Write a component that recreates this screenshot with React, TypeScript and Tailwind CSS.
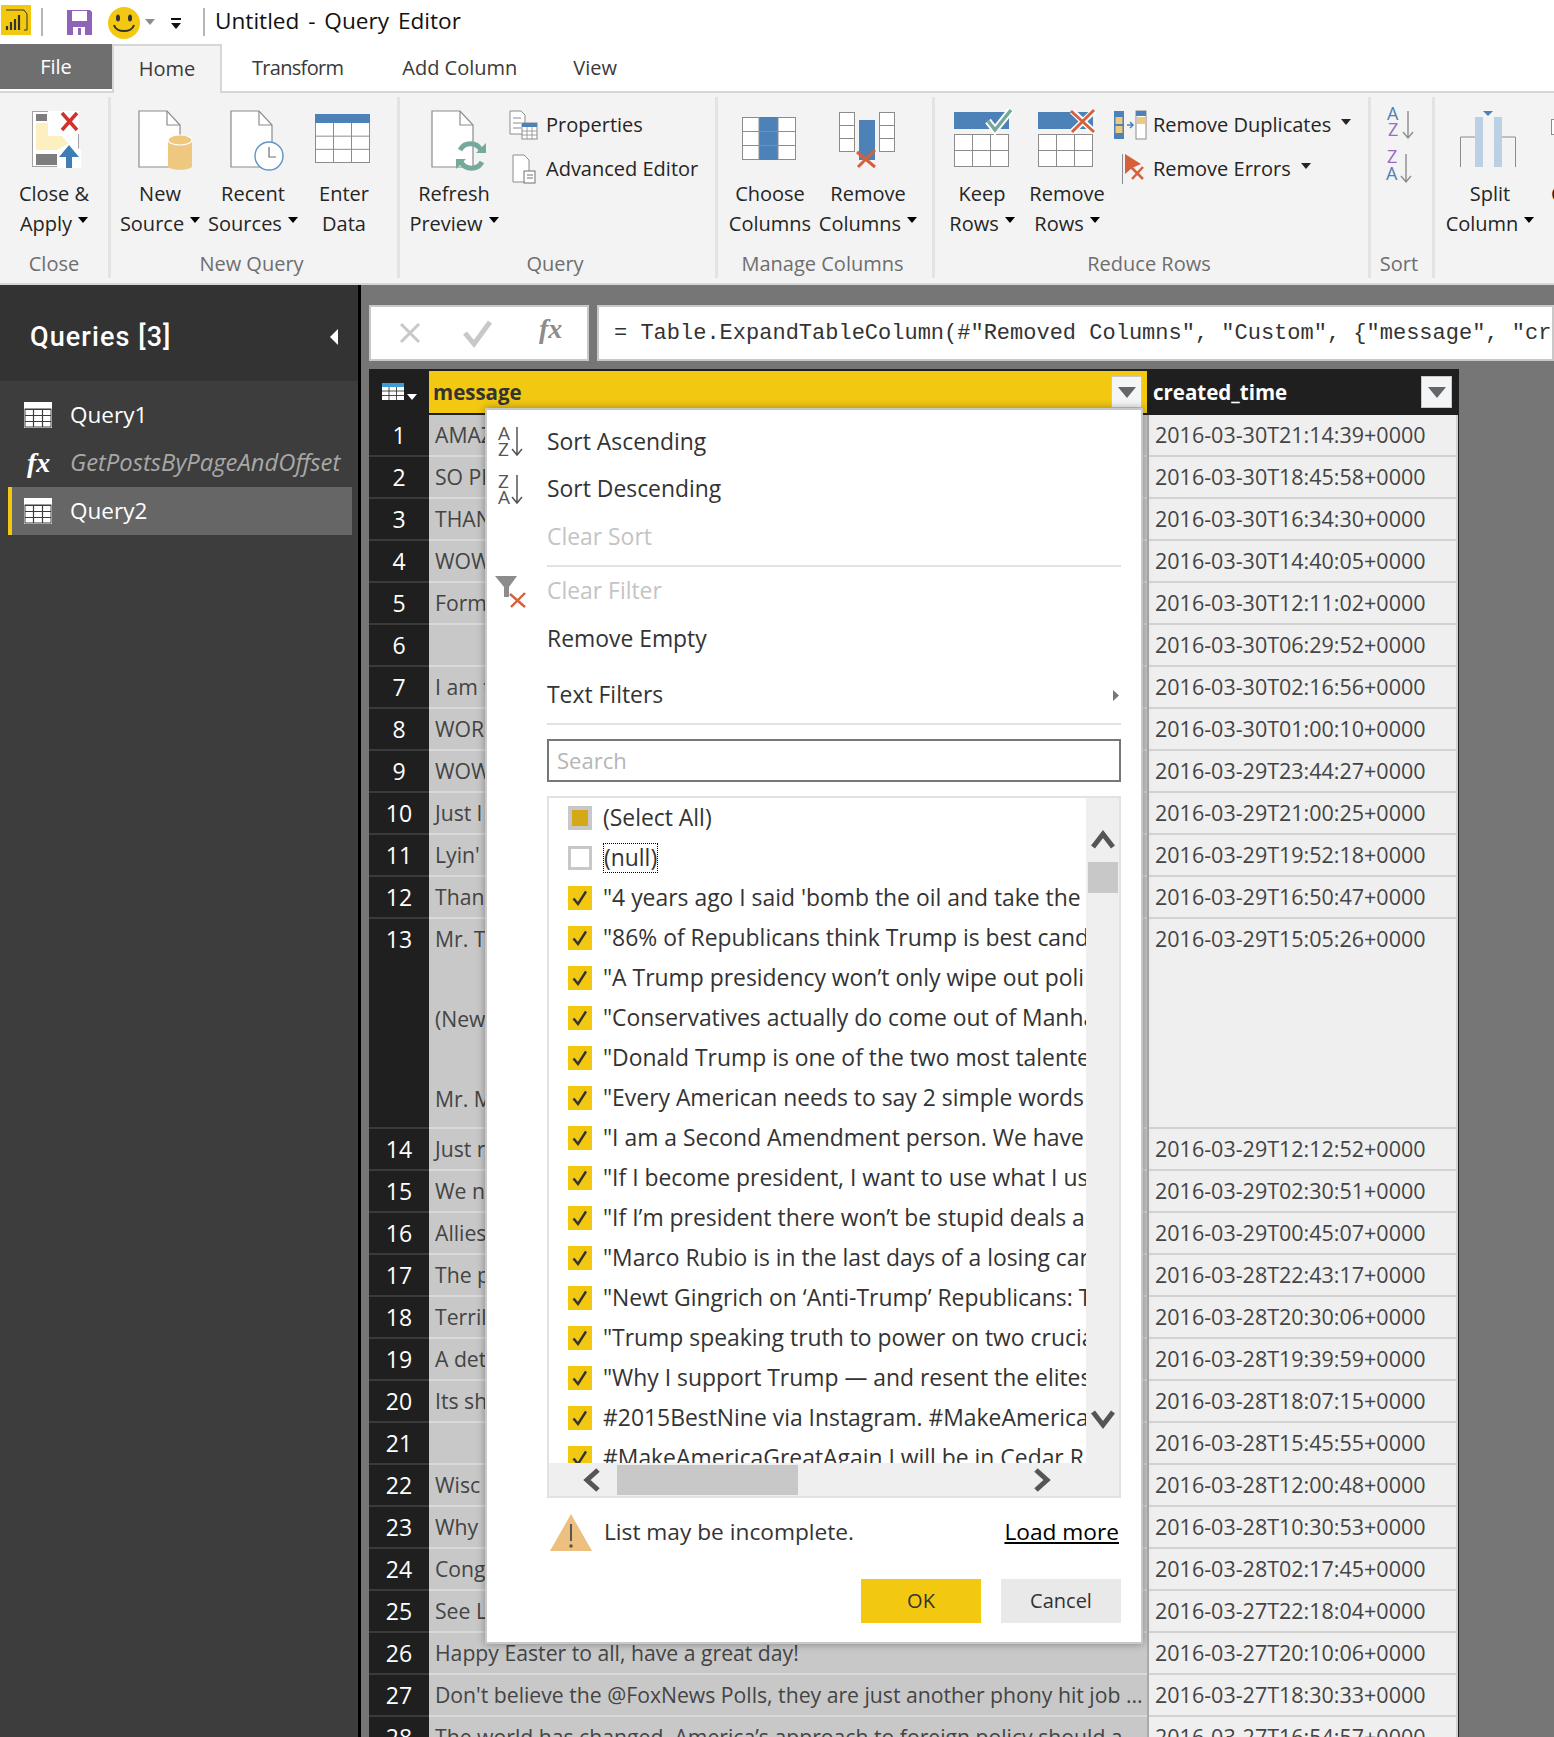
import React from 'react';

const rows: [string, string][] = [
  ['AMAZ', '2016-03-30T21:14:39+0000'],
  ['SO PR', '2016-03-30T18:45:58+0000'],
  ['THAN', '2016-03-30T16:34:30+0000'],
  ['WOW', '2016-03-30T14:40:05+0000'],
  ['Form', '2016-03-30T12:11:02+0000'],
  ['', '2016-03-30T06:29:52+0000'],
  ['I am t', '2016-03-30T02:16:56+0000'],
  ['WOR', '2016-03-30T01:00:10+0000'],
  ['WOW', '2016-03-29T23:44:27+0000'],
  ['Just l', '2016-03-29T21:00:25+0000'],
  ["Lyin'", '2016-03-29T19:52:18+0000'],
  ['Than', '2016-03-29T16:50:47+0000'],
  ['Mr. T', '2016-03-29T15:05:26+0000'],
  ['Just r', '2016-03-29T12:12:52+0000'],
  ['We n', '2016-03-29T02:30:51+0000'],
  ['Allies', '2016-03-29T00:45:07+0000'],
  ['The p', '2016-03-28T22:43:17+0000'],
  ['Terril', '2016-03-28T20:30:06+0000'],
  ['A det', '2016-03-28T19:39:59+0000'],
  ['Its sh', '2016-03-28T18:07:15+0000'],
  ['', '2016-03-28T15:45:55+0000'],
  ['Wisc', '2016-03-28T12:00:48+0000'],
  ['Why', '2016-03-28T10:30:53+0000'],
  ['Cong', '2016-03-28T02:17:45+0000'],
  ['See L', '2016-03-27T22:18:04+0000'],
  ['Happy Easter to all, have a great day!', '2016-03-27T20:10:06+0000'],
  ["Don't believe the @FoxNews Polls, they are just another phony hit job ...", '2016-03-27T18:30:33+0000'],
  ['The world has changed. America\u2019s approach to foreign policy should a', '2016-03-27T16:54:57+0000'],
];

const listItems = [
  '"4 years ago I said \'bomb the oil and take the',
  '"86% of Republicans think Trump is best cand',
  '"A Trump presidency won\u2019t only wipe out poli',
  '"Conservatives actually do come out of Manha',
  '"Donald Trump is one of the two most talente',
  '"Every American needs to say 2 simple words',
  '"I am a Second Amendment person. We have',
  '"If I become president, I want to use what I us',
  '"If I\u2019m president there won\u2019t be stupid deals a',
  '"Marco Rubio is in the last days of a losing car',
  '"Newt Gingrich on \u2018Anti-Trump\u2019 Republicans: T',
  '"Trump speaking truth to power on two crucia',
  '"Why I support Trump \u2014 and resent the elites',
  '#2015BestNine via Instagram. #MakeAmerica',
  '#MakeAmericaGreatAgain I will be in Cedar R',
];

const Caret = ({ className = 'text-black' }: { className?: string }) => (
  <svg width="10" height="6" viewBox="0 0 10 6" className={`inline-block shrink-0 ${className}`}>
    <path d="M0 0H10L5 6Z" fill="currentColor" />
  </svg>
);

const gridLines = (x: number, y: number, w: number, h: number, cols: number, lines: number, color = '#8c8c8c') => {
  const out = [];
  for (let i = 1; i < cols; i++) out.push(<line key={`c${i}`} x1={x + (w * i) / cols} y1={y} x2={x + (w * i) / cols} y2={y + h} stroke={color} strokeWidth="1" />);
  for (let i = 1; i < lines; i++) out.push(<line key={`r${i}`} x1={x} y1={y + (h * i) / lines} x2={x + w} y2={y + (h * i) / lines} stroke={color} strokeWidth="1" />);
  return out;
};

const Doc = ({ x, y = 111, w = 41, h = 56 }: { x: number; y?: number; w?: number; h?: number }) => (
  <g fill="#fff" stroke="#8c8c8c" strokeWidth="1.2">
    <path d={`M${x} ${y}H${x + w - 13}L${x + w} ${y + 14}V${y + h}H${x}Z`} />
    <path d={`M${x + w - 13} ${y}V${y + 14}H${x + w}`} fill="none" />
  </g>
);

const CloseApplyIcon = () => (
  <>
    <rect x="32.5" y="111.5" width="46" height="55" fill="#fff" stroke="#a3a3a3" />
    <rect x="36" y="114" width="11" height="7" fill="#7d7d7d" />
    <path d="M36 123H48V136H62L74 150H36Z" fill="#fdf0c0" />
    <rect x="36" y="154" width="21" height="11" fill="#7d7d7d" />
    <path d="M48 111H79V134H60L48 123Z" fill="#fff" />
    <path d="M62 113L77 130M77 113L62 130" stroke="#d1322b" strokeWidth="3.5" />
    <path d="M57 150L69 143L81 150V168H57Z" fill="#fff" />
    <path d="M69 145L79 157H72V168H66V157H59Z" fill="#3f7db5" />
  </>
);

const NewSourceIcon = () => (
  <>
    <Doc x={139} />
    <path d="M168 140V166C168 171 192 171 192 166V140Z" fill="#edc87e" />
    <ellipse cx="180" cy="140" rx="12" ry="5" fill="#edc87e" stroke="#fff" strokeWidth="1.2" />
  </>
);

const RecentIcon = () => (
  <>
    <Doc x={231} />
    <circle cx="269" cy="156" r="14" fill="#fff" stroke="#5f93c4" strokeWidth="1.4" />
    <path d="M269 147V157H276" fill="none" stroke="#707070" strokeWidth="1.2" />
  </>
);

const EnterDataIcon = () => (
  <>
    <rect x="315.5" y="114.5" width="54" height="48" fill="#fff" stroke="#8c8c8c" />
    <rect x="315" y="114" width="55" height="9" fill="#4d82b8" />
    {gridLines(315.5, 123, 54, 39.5, 3, 3)}
  </>
);

const RefreshIcon = () => (
  <>
    <Doc x={432} />
    <path d="M460 150A12 12 0 0 1 481 150" fill="none" stroke="#75a99b" strokeWidth="5" />
    <path d="M476 153H486V143Z" fill="#75a99b" />
    <path d="M482 162A12 12 0 0 1 461 162" fill="none" stroke="#75a99b" strokeWidth="5" />
    <path d="M466 159H456V169Z" fill="#75a99b" />
  </>
);

const ChooseColumnsIcon = () => (
  <>
    <rect x="742.5" y="117.5" width="53" height="42" fill="#fff" stroke="#8c8c8c" />
    <rect x="759" y="117" width="19" height="43" fill="#4d82b8" />
    {gridLines(742.5, 117.5, 53, 42, 1, 3)}
    <line x1="759" y1="117" x2="759" y2="160" stroke="#8c8c8c" />
    <line x1="778" y1="117" x2="778" y2="160" stroke="#8c8c8c" />
  </>
);

const RemoveColumnsIcon = () => (
  <>
    <rect x="839.5" y="112.5" width="15" height="39" fill="#fff" stroke="#8c8c8c" />
    {gridLines(839.5, 112.5, 15, 39, 1, 3)}
    <rect x="879.5" y="112.5" width="15" height="39" fill="#fff" stroke="#8c8c8c" />
    {gridLines(879.5, 112.5, 15, 39, 1, 3)}
    <rect x="859" y="120" width="16" height="40" fill="#4d82b8" />
    <path d="M857 152L875 167M875 150L858 167" stroke="#d65f3c" strokeWidth="3" />
  </>
);

const RowsBody = ({ x }: { x: number }) => (
  <>
    <rect x={x} y="112" width="55" height="17" fill="#4d82b8" />
    <rect x={x + 0.5} y="134.5" width="54" height="32" fill="#fff" stroke="#8c8c8c" />
    {gridLines(x + 0.5, 134.5, 54, 32, 3, 2)}
  </>
);

const KeepRowsIcon = () => (
  <>
    <RowsBody x={954} />
    <path d="M988 121L995 130L1011 110" fill="none" stroke="#fff" strokeWidth="7" />
    <path d="M988 121L995 130L1011 110" fill="none" stroke="#75a99b" strokeWidth="3.5" />
  </>
);

const RemoveRowsIcon = () => (
  <>
    <RowsBody x={1038} />
    <path d="M1072 111L1094 132M1094 111L1072 132" stroke="#fff" strokeWidth="6" />
    <path d="M1071 111L1094 132M1094 110L1072 132" stroke="#d65f3c" strokeWidth="3" />
  </>
);

const SplitIcon = () => (
  <>
    <path d="M1475 137H1460.5V167M1502 137H1515.5V167" fill="none" stroke="#8c8c8c" />
    <rect x="1475" y="117" width="8" height="50" fill="#bcd0e4" />
    <rect x="1494" y="117" width="8" height="50" fill="#bcd0e4" />
    <path d="M1483 111H1493L1488 116Z" fill="#4d82b8" />
  </>
);

const LargeButton = ({ left, className, lines, icon, caret = true }: { left: number; className: string; lines: [string, string]; icon?: React.ReactNode; caret?: boolean }) => {
  const width = parseInt(className.replace(/\D/g, ''), 10);
  return (
    <div className={`flex shrink-0 flex-col items-center pt-[8px] ${className}`}>
      <svg width={width} height="68" viewBox={`${left} 105 ${width} 68`} className="overflow-visible">
        {icon}
      </svg>
      <div className="mt-[6px] text-center text-[20px] leading-[30px] text-[#252525] whitespace-nowrap">
        <div>{lines[0]}</div>
        <div className="flex items-center justify-center gap-[6px]">
          {lines[1]}
          {caret && <Caret className="-mt-[8px] text-black" />}
        </div>
      </div>
    </div>
  );
};

const Group = ({ className, label, labelClass = 'pr-[5px]', children }: { className: string; label: string; labelClass?: string; children: React.ReactNode }) => (
  <div className={`mt-[4px] flex h-[181px] shrink-0 flex-col border-r-[3px] border-[#e3e3e3] ${className}`}>
    <div className="flex h-[142px]">{children}</div>
    <div className={`mt-[11px] text-center text-[20px] leading-[28px] text-[#6e6e6e] whitespace-nowrap ${labelClass}`}>{label}</div>
  </div>
);

const SmallAction = ({ icon, label, caret }: { icon: React.ReactNode; label: string; caret?: boolean }) => (
  <div className="flex h-[44px] items-center text-[20px] text-[#252525] whitespace-nowrap">
    {icon}
    <span>{label}</span>
    {caret && <Caret className="-mt-[6px] ml-[10px]" />}
  </div>
);

const Ribbon = () => (
  <div className="flex h-[194px] overflow-hidden border-t-2 border-[#d6d6d6] border-b-2 bg-[#f3f3f3]">
    <Group className="w-[111px]" label="Close" labelClass="pr-0">
      <LargeButton left={0} className="w-[108px]" lines={['Close &', 'Apply']} icon={<CloseApplyIcon />} />
    </Group>
    <Group className="w-[289px]" label="New Query">
      <div className="w-[3px] shrink-0" />
      <LargeButton left={114} className="w-[92px]" lines={['New', 'Source']} icon={<NewSourceIcon />} />
      <LargeButton left={206} className="w-[94px]" lines={['Recent', 'Sources']} icon={<RecentIcon />} />
      <LargeButton left={300} className="w-[88px]" lines={['Enter', 'Data']} icon={<EnterDataIcon />} caret={false} />
    </Group>
    <Group className="w-[318px]" label="Query">
      <div className="w-[4px] shrink-0" />
      <LargeButton left={404} className="w-[100px]" lines={['Refresh', 'Preview']} icon={<RefreshIcon />} />
      <div className="flex flex-col pt-[6px] pl-[5px]">
        <SmallAction
          label="Properties"
          icon={
            <svg width="37" height="30" viewBox="0 0 37 30" className="shrink-0">
              <path d="M1 1H12L16 5V24H1Z" fill="#fff" stroke="#8c8c8c" />
              <path d="M4 8H12M4 13H12M4 18H12" stroke="#8c8c8c" />
              <rect x="13" y="13" width="15" height="16" fill="#fff" stroke="#8c8c8c" />
              <rect x="13" y="13" width="15" height="4" fill="#4d82b8" />
              <path d="M18 17V29M23 17V29M13 21H28M13 25H28" stroke="#8c8c8c" strokeWidth="0.8" />
            </svg>
          }
        />
        <SmallAction
          label="Advanced Editor"
          icon={
            <svg width="37" height="30" viewBox="0 0 37 30" className="shrink-0">
              <path d="M4 1H15L20 6V28H4Z" fill="#fff" stroke="#8c8c8c" />
              <rect x="15" y="17" width="11" height="12" fill="#fff" stroke="#707070" />
              <path d="M18 21H24M18 24H24" stroke="#707070" />
            </svg>
          }
        />
      </div>
    </Group>
    <Group className="w-[217px]" label="Manage Columns">
      <div className="w-[10px] shrink-0" />
      <LargeButton left={728} className="w-[84px]" lines={['Choose', 'Columns']} icon={<ChooseColumnsIcon />} caret={false} />
      <LargeButton left={812} className="w-[112px]" lines={['Remove', 'Columns']} icon={<RemoveColumnsIcon />} />
    </Group>
    <Group className="w-[436px]" label="Reduce Rows">
      <div className="w-[5px] shrink-0" />
      <LargeButton left={940} className="w-[84px]" lines={['Keep', 'Rows']} icon={<KeepRowsIcon />} />
      <LargeButton left={1024} className="w-[86px]" lines={['Remove', 'Rows']} icon={<RemoveRowsIcon />} />
      <div className="flex flex-col pt-[6px] pl-[4px]">
        <SmallAction
          label="Remove Duplicates"
          caret
          icon={
            <svg width="39" height="30" viewBox="0 0 39 30" className="shrink-0">
              <rect x="0" y="1" width="10" height="28" fill="#4d82b8" />
              <rect x="1.5" y="7" width="7" height="7" fill="#edc87e" />
              <rect x="1.5" y="16" width="7" height="7" fill="#edc87e" />
              <rect x="22" y="1" width="10" height="28" fill="#fff" stroke="#8c8c8c" />
              <rect x="22" y="1" width="10" height="5" fill="#4d82b8" />
              <rect x="23" y="7" width="8" height="7" fill="#edc87e" />
              <path d="M13 15H19M16 12L19 15L16 18" fill="none" stroke="#4d82b8" strokeWidth="1.5" />
            </svg>
          }
        />
        <SmallAction
          label="Remove Errors"
          caret
          icon={
            <svg width="39" height="30" viewBox="0 0 39 30" className="shrink-0">
              <path d="M8.500 0V30" stroke="#8c8c8c" />
              <path d="M11 0L27 10L18 14L11 20Z" fill="#d65f3c" />
              <path d="M17 13L29 25M29 13L18 25" stroke="#d65f3c" strokeWidth="2.5" />
            </svg>
          }
        />
      </div>
    </Group>
    <Group className="w-[64px]" label="Sort">
      <svg width="61" height="84" viewBox="0 0 61 84" className="mt-[6px] shrink-0 [font-family:'Open_Sans',sans-serif]">
        <text x="16" y="17" fontSize="18" fill="#4d82b8">A</text>
        <text x="17" y="33" fontSize="18" fill="#9b6dbb">Z</text>
        <path d="M37 8V35M32 29L37 35L42 29" fill="none" stroke="#8c8c8c" strokeWidth="1.4" />
        <text x="16" y="60" fontSize="18" fill="#9b6dbb">Z</text>
        <text x="15" y="77" fontSize="18" fill="#4d82b8">A</text>
        <path d="M35 51V79M30 73L35 79L40 73" fill="none" stroke="#8c8c8c" strokeWidth="1.4" />
      </svg>
    </Group>
    <Group className="w-[200px] border-r-0" label="">
      <LargeButton left={1435} className="w-[110px]" lines={['Split', 'Column']} icon={<SplitIcon />} />
      <div className="flex flex-col items-start pt-[8px] pl-[6px]">
        <div className="mt-[14px] h-[16px] w-[20px] border border-[#8c8c8c] bg-white" />
        <div className="mt-[44px] text-[20px] leading-[30px] text-[#252525]">Custom</div>
      </div>
    </Group>
  </div>
);

const TitleBar = () => (
  <div className="flex h-[44px] items-center">
    <svg width="215" height="44" viewBox="0 0 215 44" className="shrink-0">
      <rect x="1" y="5" width="30" height="30" fill="#f2c811" />
      <path d="M6 10H24L27 14V30H24" fill="none" stroke="#333" strokeWidth="1" />
      <path d="M7 26V30M11 22V30M15 19V30M19 15V30" stroke="#333" strokeWidth="2.2" />
      <rect x="41" y="8" width="2" height="28" fill="#b5b5b5" />
      <path d="M67 10H90L92 12V35H67Z" fill="#9063b8" />
      <rect x="72" y="11" width="15" height="10" fill="#fff" />
      <rect x="73" y="27" width="12" height="8" fill="#fff" />
      <rect x="78" y="28" width="3" height="7" fill="#9063b8" />
      <ellipse cx="124" cy="23" rx="16" ry="16" fill="#f2c811" />
      <ellipse cx="118" cy="18" rx="2" ry="3.5" fill="#333" />
      <ellipse cx="130" cy="18" rx="2" ry="3.5" fill="#333" />
      <path d="M114 25C116 33 132 33 134 25" fill="none" stroke="#333" strokeWidth="2" />
      <path d="M145 19H155L150 25Z" fill="#8c8c8c" />
      <rect x="171" y="18" width="10" height="2" fill="#111" />
      <path d="M171 23H181L176 29Z" fill="#111" />
      <rect x="203" y="8" width="2" height="28" fill="#b5b5b5" />
    </svg>
    <span className="-mt-[3px] text-[22.6px] [word-spacing:3px] text-[#111] whitespace-nowrap">Untitled - Query Editor</span>
  </div>
);

const Tabs = () => (
  <div className="flex h-[47px] text-[20px] text-[#3a3a3a]">
    <div className="flex w-[112px] items-center justify-center bg-[#6f6f6f] text-white mb-[2px]">File</div>
    <div className="relative z-10 -mb-[2px] flex w-[110px] items-center justify-center border-x-2 border-t-2 border-[#d6d6d6] bg-[#f3f3f3] pb-[2px]">Home</div>
    <div className="ml-[30px] flex items-center tracking-[-0.7px]">Transform</div>
    <div className="ml-[59px] flex items-center">Add Column</div>
    <div className="ml-[56px] flex items-center">View</div>
  </div>
);

const TableIcon = () => (
  <svg width="28" height="26" viewBox="0 0 28 26" className="shrink-0">
    <rect x="0" y="0" width="28" height="26" fill="#fff" />
    <path d="M1 7.5H27M1 13.5H27M1 19.5H27M9.5 7V25M18.5 7V25" stroke="#3c3c3c" strokeWidth="1.2" />
    <rect x="1" y="7" width="26" height="18" fill="none" stroke="#3c3c3c" strokeWidth="1" />
  </svg>
);

const FxIcon = ({ className }: { className: string }) => (
  <span className={`[font-family:'Liberation_Serif',serif] italic ${className}`}>fx</span>
);

const Sidebar = () => (
  <div className="w-[361px] shrink-0 border-r-[3px] border-black bg-[#3d3d3d]">
    <div className="flex h-[96px] items-center justify-between bg-[#333333] pt-[8px] pr-[18px] pl-[30px]">
      <span className="[font-family:Roboto,sans-serif] text-[27px] font-medium tracking-[1.08px] text-white">Queries [3]</span>
      <svg width="10" height="16" viewBox="0 0 10 16"><path d="M8 0V16L0 8Z" fill="#fff" /></svg>
    </div>
    <div className="pt-[10px] text-[22.500px]">
      <div className="flex h-[48px] items-center gap-[18px] pl-[24px] text-white">
        <TableIcon />
        Query1
      </div>
      <div className="flex h-[46px] items-center pt-[2px] pl-[27px] text-[#a8a8a8]">
        <FxIcon className="w-[43px] text-[28px] font-semibold text-white" />
        <span className="text-[23.800px] italic whitespace-nowrap">GetPostsByPageAndOffset</span>
      </div>
      <div className="mt-[2px] mr-[6px] ml-[8px] flex h-[48px] items-center gap-[18px] border-l-4 border-[#f2c811] bg-[#666666] pl-[12px] text-white">
        <TableIcon />
        Query2
      </div>
    </div>
  </div>
);

const DropButton = () => (
  <div className="flex h-[32px] w-[31px] items-center justify-center border border-[#c8c8c8] bg-[#f3f5f6]">
    <svg width="18" height="11" viewBox="0 0 18 11"><path d="M0 0H18L9 11Z" fill="#666" /></svg>
  </div>
);

const Row = ({ index, message, date }: { index: number; message: string; date: string }) => {
  const tall = index === 13;
  return (
    <div className={`flex ${tall ? 'h-[210px]' : 'h-[42px]'}`}>
      <div className="w-[60px] border-b-2 border-[#3a3a3a] bg-[#1f1f1f] text-center text-[23px] leading-[40px] text-white">{index}</div>
      <div className="w-[718px] overflow-hidden border-b-2 border-[#d9d9d9] bg-[#c8c8c8] pl-[6px] text-[21.200px] leading-[40px] text-[#444] whitespace-nowrap">
        {tall ? (
          <>
            <div>{message}</div>
            <div className="h-[40px]" />
            <div className="flex justify-between pr-[12px]"><span>(New</span><span>n</span></div>
            <div className="h-[40px]" />
            <div className="flex justify-between pr-[12px]"><span>Mr. M</span><span>k</span></div>
          </>
        ) : (
          message
        )}
      </div>
      <div className="w-[2px] bg-[#aaaaaa]" />
      <div className="w-[309px] border-b-2 border-r-2 border-[#d2d2d2] bg-[#efefef] pl-[6px] text-[21.500px] leading-[40px] text-[#444] whitespace-nowrap">{date}</div>
    </div>
  );
};

const Check = () => (
  <span className="flex h-[24px] w-[24px] shrink-0 items-center justify-center bg-[#f2c811]">
    <svg width="16" height="16" viewBox="0 0 16 16"><path d="M1.5 8.5L6 14L14 1.5" fill="none" stroke="#333" strokeWidth="2.4" /></svg>
  </span>
);

const MenuItem = ({ label, icon, muted, className = 'h-[48px]' }: { label: string; icon?: React.ReactNode; muted?: boolean; className?: string }) => (
  <div className={`flex items-center text-[22.900px] ${muted ? 'text-[#c4c4c4]' : 'text-[#333]'} ${className}`}>
    <div className="flex h-full w-[60px] shrink-0 items-center">{icon}</div>
    <span>{label}</span>
  </div>
);

const SortGlyph = ({ first, second }: { first: string; second: string }) => (
  <svg width="60" height="48" viewBox="0 0 60 48" className="[font-family:'Open_Sans',sans-serif]">
    <text x="11" y="22" fontSize="19" fill="#555">{first}</text>
    <text x="11" y="38" fontSize="19" fill="#555">{second}</text>
    <path d="M30 9V37M25 31L30 37L35 31" fill="none" stroke="#555" strokeWidth="1.5" />
  </svg>
);

const FilterPopup = () => (
  <div className="absolute top-[123px] left-[124px] z-20 h-[1236px] w-[658px] border-2 border-[#c8c8c8] bg-white pt-[8px] pr-[20px] shadow-[0_0_8px_rgba(0,0,0,0.35)]">
    <MenuItem label="Sort Ascending" icon={<SortGlyph first="A" second="Z" />} />
    <MenuItem label="Sort Descending" className="h-[47px]" icon={<SortGlyph first="Z" second="A" />} />
    <MenuItem label="Clear Sort" muted />
    <div className="mt-[4px] ml-[60px] h-[2px] bg-[#dfe3e6]" />
    <MenuItem
      label="Clear Filter"
      muted
      icon={
        <svg width="60" height="48" viewBox="0 0 60 48">
          <path d="M8 9H30L22 20V30H17V20Z" fill="#8c8c8c" />
          <path d="M23 27L38 40M38 26L24 40" stroke="#d65f3c" strokeWidth="2.4" />
        </svg>
      }
    />
    <MenuItem label="Remove Empty" />
    <div className="relative mt-[8px]">
      <MenuItem label="Text Filters" />
      <svg width="6" height="11" viewBox="0 0 6 11" className="absolute top-[19px] right-[2px]"><path d="M0 0L6 5.500L0 11Z" fill="#777" /></svg>
    </div>
    <div className="mt-[4px] ml-[60px] h-[2px] bg-[#dfe3e6]" />
    <div className="mt-[14px] ml-[60px] flex h-[43px] items-center border-2 border-[#777] pl-[8px] text-[22px] text-[#b5b5b5]">Search</div>
    <div className="mt-[14px] ml-[60px] flex h-[702px] flex-col border-2 border-[#e0e3e6]">
      <div className="flex h-[665px] overflow-hidden">
        <div className="min-w-0 flex-1 overflow-hidden pl-[19px] text-[22.900px] text-[#333]">
          <div className="flex h-[40px] items-center gap-[11px] whitespace-nowrap">
            <span className="flex h-[24px] w-[24px] shrink-0 items-center justify-center bg-[#c8c8c8]">
              <span className="h-[16px] w-[16px] bg-[#d4a817]" />
            </span>
            (Select All)
          </div>
          <div className="flex h-[40px] items-center gap-[11px] whitespace-nowrap">
            <span className="h-[24px] w-[24px] shrink-0 border-[3px] border-[#c8c8c8] bg-white" />
            <span className="border border-dotted border-black leading-[28px]">(null)</span>
          </div>
          {listItems.map((item) => (
            <div key={item} className="flex h-[40px] items-center gap-[11px] whitespace-nowrap">
              <Check />
              <span>{item}</span>
            </div>
          ))}
        </div>
        <div className="flex w-[33px] shrink-0 flex-col items-center bg-[#efefef]">
          <svg width="24" height="20" viewBox="0 0 24 20" className="mt-[31px]"><path d="M2 18L12 5L22 18" fill="none" stroke="#555" strokeWidth="5" /></svg>
          <div className="mt-[13px] h-[31px] w-[30px] bg-[#c8c8c8]" />
          <div className="flex-1" />
          <svg width="24" height="20" viewBox="0 0 24 20" className="mb-[33px]"><path d="M2 2L12 15L22 2" fill="none" stroke="#555" strokeWidth="5" /></svg>
        </div>
      </div>
      <div className="flex h-[33px] items-center bg-[#efefef]">
        <svg width="20" height="24" viewBox="0 0 20 24" className="ml-[33px]"><path d="M16 2L5 12L16 22" fill="none" stroke="#555" strokeWidth="5" /></svg>
        <div className="ml-[15px] h-[30px] w-[181px] bg-[#c8c8c8]" />
        <svg width="20" height="24" viewBox="0 0 20 24" className="ml-[234px]"><path d="M4 2L15 12L4 22" fill="none" stroke="#555" strokeWidth="5" /></svg>
      </div>
    </div>
    <div className="mt-[16px] ml-[63px] flex h-[37px] items-center text-[22.700px] text-[#333]">
      <svg width="42" height="38" viewBox="0 0 42 38" className="shrink-0">
        <path d="M21 0L42 37H0Z" fill="#edc07f" />
        <path d="M21 10V27" stroke="#555" strokeWidth="2" />
        <circle cx="21" cy="32" r="1.800" fill="#555" />
      </svg>
      <span className="ml-[12px] flex-1">List may be incomplete.</span>
      <span className="mr-[2px] text-black underline">Load more</span>
    </div>
    <div className="mt-[28px] flex justify-end gap-[20px] text-[20px] text-[#333]">
      <div className="flex h-[44px] w-[120px] items-center justify-center bg-[#f2c811]">OK</div>
      <div className="flex h-[44px] w-[120px] items-center justify-center bg-[#e9e9e9]">Cancel</div>
    </div>
  </div>
);

const Main = () => (
  <div className="relative min-w-0 flex-1 overflow-hidden bg-[#767676] pt-[20px] pl-[8px]">
    <div className="flex h-[56px] gap-[8px]">
      <div className="flex w-[220px] shrink-0 items-center border-2 border-[#c8c8c8] bg-white text-[#c8c8c8]">
        <svg width="150" height="34" viewBox="0 0 150 34" className="shrink-0">
          <path d="M30 8L48 26M48 8L30 26" stroke="#c8c8c8" strokeWidth="3" fill="none" />
          <path d="M94 17L103 28L119 6" stroke="#c8c8c8" strokeWidth="5" fill="none" />
        </svg>
        <FxIcon className="-mt-[8px] ml-[18px] text-[28px] font-semibold text-[#8c8c8c]" />
      </div>
      <div className="flex flex-1 items-center overflow-hidden border-2 border-[#c8c8c8] bg-white pl-[15px] [font-family:'Liberation_Mono',monospace] text-[22px] text-[#333] whitespace-pre">
        {'= Table.ExpandTableColumn(#"Removed Columns", "Custom", {"message", "created_time"})'}
      </div>
    </div>
    <div className="mt-[8px] w-[1090px] bg-[#1f1f1f]">
      <div className="flex h-[46px] items-center">
        <div className="flex w-[60px] items-center justify-center">
          <svg width="38" height="20" viewBox="0 0 38 20">
            <rect x="2" y="1" width="22" height="17" fill="#fff" />
            <rect x="2" y="1" width="22" height="4" fill="#3f9bd8" />
            <path d="M2 9H24M2 13.500H24M9 5V18M16.500 5V18" stroke="#1f1f1f" strokeWidth="0.8" />
            <path d="M27 12H37L32 18Z" fill="#fff" />
          </svg>
        </div>
        <div className="flex h-[42px] w-[718px] items-center justify-between bg-[#f2c811] pr-[5px] pl-[4px] text-[20.500px] font-bold text-[#333]">
          <span>message</span>
          <DropButton />
        </div>
        <div className="ml-[2px] flex w-[309px] items-center justify-between pr-[6px] pl-[4px] text-[20.500px] font-bold text-white">
          <span>created_time</span>
          <DropButton />
        </div>
      </div>
      {rows.map(([message, date], i) => (
        <Row key={i} index={i + 1} message={message} date={date} />
      ))}
    </div>
    <FilterPopup />
  </div>
);

export default function App() {
  return (
    <div className="flex h-[1737px] w-[1554px] flex-col overflow-hidden bg-white [font-family:'Open_Sans',sans-serif]">
      <TitleBar />
      <Tabs />
      <Ribbon />
      <div className="flex min-h-0 flex-1">
        <Sidebar />
        <Main />
      </div>
    </div>
  );
}
